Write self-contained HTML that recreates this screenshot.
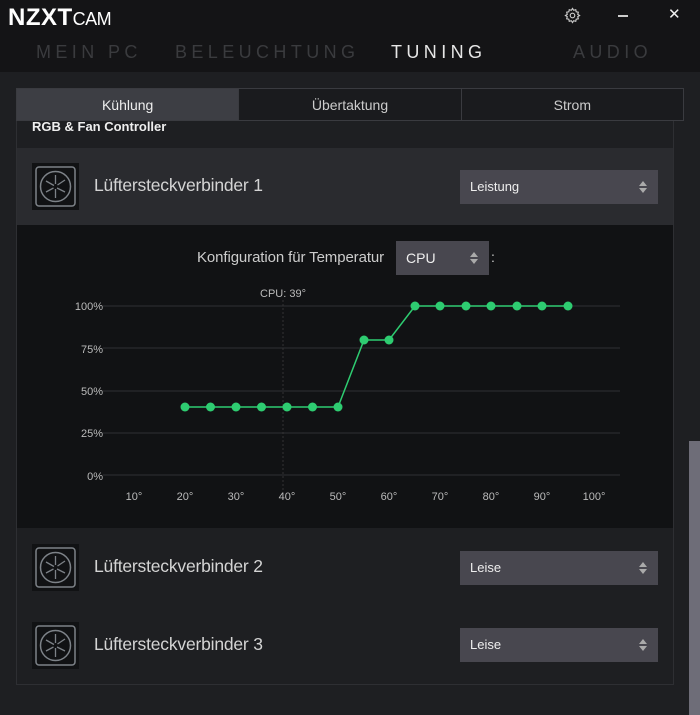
<!DOCTYPE html><html><head><meta charset="utf-8"><style>
*{margin:0;padding:0;box-sizing:border-box}
body{width:700px;height:715px;background:#1e1f22;font-family:"Liberation Sans",sans-serif;position:relative;overflow:hidden;color:#ddd}
.abs{position:absolute}
.hdr{left:0;top:0;width:700px;height:72px;background:#141416}
.nav{top:42px;font-size:18px;letter-spacing:4.4px;color:#3a3b3e}
.tabs{left:16px;top:88px;width:668px;height:33px;border:1px solid #3a3b40;display:flex;background:#1a1b1e}
.tabs div{flex:1;text-align:center;line-height:32px;font-size:14px;color:#ccc;border-left:1px solid #3a3b40}
.tabs div:first-child{border-left:none;background:#3d3e44;color:#eee}
.panel{left:16px;top:121px;width:658px;height:564px;border:1px solid #2e2f33;border-top:none;background:#1e1f22}
.row{left:17px;width:656px;height:77px}
.icon{width:47px;height:47px;background:#111214;left:32px}
.lbl{left:94px;font-size:17.5px;color:#d4d4d4;letter-spacing:-0.2px}
.sel{left:460px;width:198px;height:34px;background:#48474f;font-size:13px;color:#eee;padding-left:10px;line-height:34px}
.arr{position:absolute;right:10px;top:10px}
</style></head><body>
<div class="abs hdr"></div>
<div class="abs" style="left:8px;top:4px;font-size:24px;font-weight:bold;color:#fff;letter-spacing:0.5px">NZXT<span style="font-weight:normal;font-size:18px;letter-spacing:-0.5px">CAM</span></div>
<svg class="abs" style="left:564px;top:7px" width="17" height="17" viewBox="0 0 24 24" fill="none" stroke="#ccc" stroke-width="1.6"><circle cx="12" cy="12" r="3.2"/><path d="M12 2l1.6 2.6 3-.8.6 3 3 .6-.8 3L22 12l-2.6 1.6.8 3-3 .6-.6 3-3-.8L12 22l-1.6-2.6-3 .8-.6-3-3-.6.8-3L2 12l2.6-1.6-.8-3 3-.6.6-3 3 .8z"/></svg>
<div class="abs" style="left:618px;top:15px;width:10px;height:1.5px;background:#ccc"></div>
<div class="abs" style="left:668px;top:5px;font-size:15px;color:#eee">✕</div>
<div class="abs nav" style="left:36px">MEIN PC</div>
<div class="abs nav" style="left:175px">BELEUCHTUNG</div>
<div class="abs nav" style="left:391px;color:#e6e6e6">TUNING</div>
<div class="abs nav" style="left:573px">AUDIO</div>
<div class="abs tabs"><div>Kühlung</div><div>Übertaktung</div><div>Strom</div></div>
<div class="abs panel"></div>
<div class="abs" style="left:32px;top:119px;font-size:13px;font-weight:bold;color:#eee">RGB &amp; Fan Controller</div>
<div class="abs row" style="top:148px;background:#2a2b2f"></div>
<div class="abs row" style="top:225px;height:303px;background:#111214"></div>
<div class="abs" style="left:689px;top:441px;width:11px;height:274px;background:#6e6d78"></div>

<svg width="0" height="0" style="position:absolute"><defs><g id="fan"><rect x="4" y="4" width="39" height="39" rx="3" fill="none" stroke="#7d8288" stroke-width="1.5"/><circle cx="23.5" cy="23.5" r="15" fill="none" stroke="#7d8288" stroke-width="1.5"/><g stroke="#7d8288" stroke-width="1.3"><path d="M23.5 12v9M33 17l-7.5 5M33 29l-8-4M23.5 35v-9M14 29l7.5-4M14 18l8 4.5"/></g></g></defs></svg>
<svg class="abs icon" style="top:163px" viewBox="0 0 47 47"><use href="#fan"/></svg>
<div class="abs lbl" style="top:175px">Lüftersteckverbinder 1</div>
<div class="abs sel" style="top:170px">Leistung<svg class="arr" width="10" height="14"><path d="M5 1L9 6H1z M5 13L9 8H1z" fill="#aaa"/></svg></div>

<div class="abs" style="left:197px;top:249px;font-size:15px;color:#ccc;letter-spacing:-0.1px">Konfiguration für Temperatur</div>
<div class="abs sel" style="left:396px;top:241px;width:93px;height:34px;font-size:14px">CPU<svg class="arr" width="10" height="14"><path d="M5 1L9 6H1z M5 13L9 8H1z" fill="#aaa"/></svg></div>
<div class="abs" style="left:491px;top:249px;font-size:14px;color:#ccc">:</div>

<svg class="abs" style="left:0;top:0" width="700" height="715">
<g stroke="#2a2b2e" stroke-width="1.2"><path d="M103 306H620M103 348H620M103 391H620M103 433H620M103 475H620"/></g>
<path d="M283 300V490" stroke="#333" stroke-dasharray="2 2"/>
<g font-family="Liberation Sans" font-size="11" fill="#bbb" text-anchor="end"><text x="103" y="310">100%</text><text x="103" y="353">75%</text><text x="103" y="395">50%</text><text x="103" y="437">25%</text><text x="103" y="480">0%</text></g>
<text x="283" y="297" font-family="Liberation Sans" font-size="11" fill="#bbb" text-anchor="middle">CPU: 39°</text>
<g font-family="Liberation Sans" font-size="11" fill="#bbb" text-anchor="middle"><text x="134" y="500">10°</text><text x="185" y="500">20°</text><text x="236" y="500">30°</text><text x="287" y="500">40°</text><text x="338" y="500">50°</text><text x="389" y="500">60°</text><text x="440" y="500">70°</text><text x="491" y="500">80°</text><text x="542" y="500">90°</text><text x="594" y="500">100°</text></g>
<polyline fill="none" stroke="#2ecc71" stroke-width="1.5" points="185,407 338,407 364,340 389,340 415,306 568,306"/>
<g fill="#2ecc71"><circle cx="185" cy="407" r="4.5"/><circle cx="210.5" cy="407" r="4.5"/><circle cx="236" cy="407" r="4.5"/><circle cx="261.5" cy="407" r="4.5"/><circle cx="287" cy="407" r="4.5"/><circle cx="312.5" cy="407" r="4.5"/><circle cx="338" cy="407" r="4.5"/><circle cx="364" cy="340" r="4.5"/><circle cx="389" cy="340" r="4.5"/><circle cx="415" cy="306" r="4.5"/><circle cx="440" cy="306" r="4.5"/><circle cx="466" cy="306" r="4.5"/><circle cx="491" cy="306" r="4.5"/><circle cx="517" cy="306" r="4.5"/><circle cx="542" cy="306" r="4.5"/><circle cx="568" cy="306" r="4.5"/></g>
</svg>

<svg class="abs icon" style="top:544px" viewBox="0 0 47 47"><use href="#fan"/></svg>
<div class="abs lbl" style="top:556px">Lüftersteckverbinder 2</div>
<div class="abs sel" style="top:551px">Leise<svg class="arr" width="10" height="14"><path d="M5 1L9 6H1z M5 13L9 8H1z" fill="#aaa"/></svg></div>
<svg class="abs icon" style="top:622px" viewBox="0 0 47 47"><use href="#fan"/></svg>
<div class="abs lbl" style="top:634px">Lüftersteckverbinder 3</div>
<div class="abs sel" style="top:628px">Leise<svg class="arr" width="10" height="14"><path d="M5 1L9 6H1z M5 13L9 8H1z" fill="#aaa"/></svg></div>
</body></html>
